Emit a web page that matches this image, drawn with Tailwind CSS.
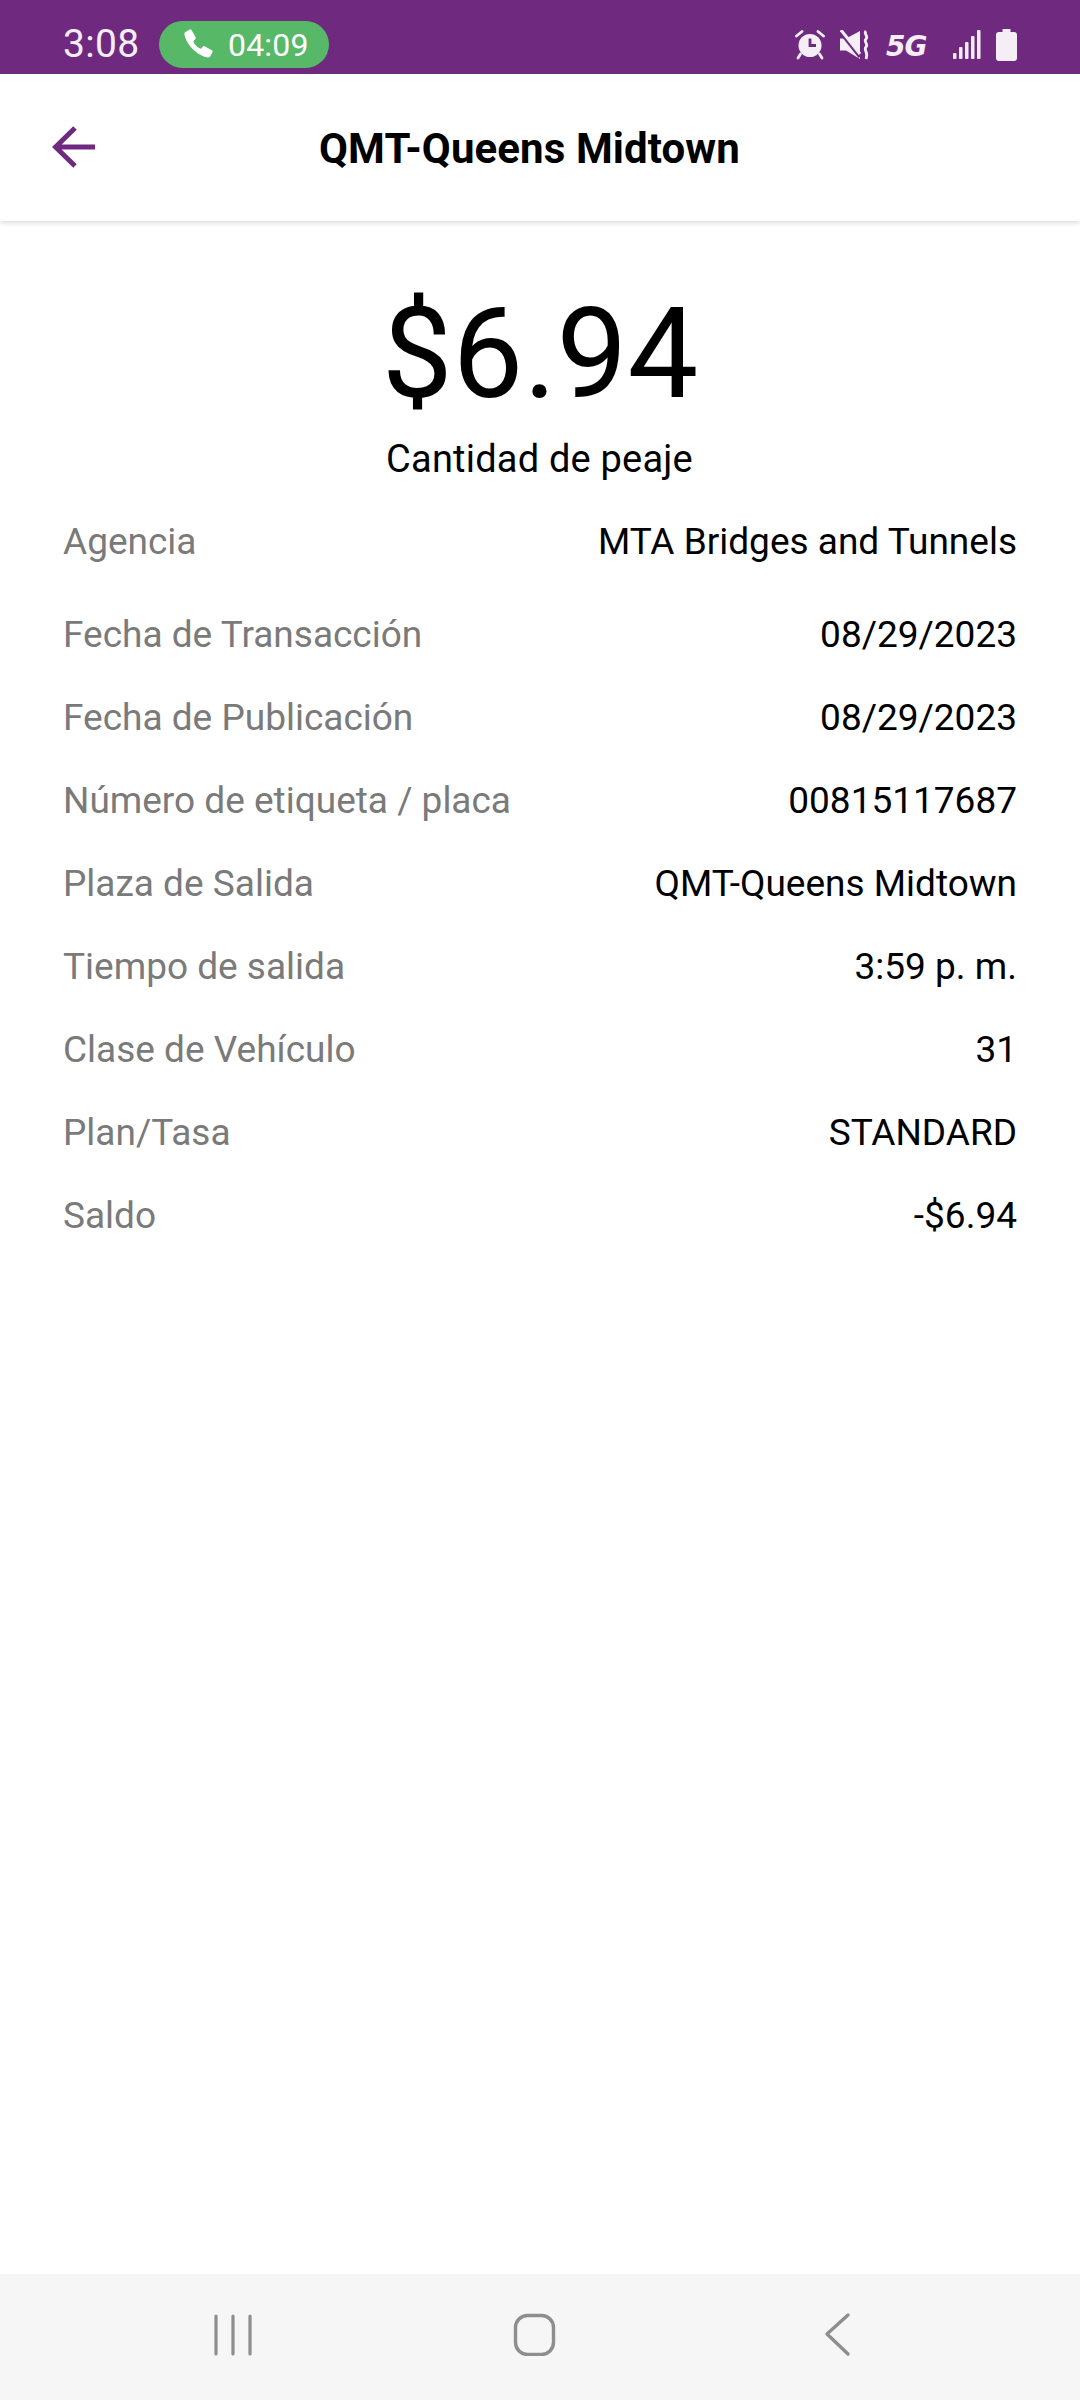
<!DOCTYPE html>
<html><head><meta charset="utf-8">
<script src="https://cdn.jsdelivr.net/npm/@tailwindcss/browser@4"></script>
</head>
<body class="m-0 bg-white">
<div class="w-[1080px] h-[2400px] flex flex-col bg-white font-['Roboto',sans-serif] overflow-hidden">
  <div class="h-[74px] shrink-0 bg-[#6f2a80] flex items-center pl-[63px] pr-[63px] pt-[15px] text-[#f5eef7]">
    <span class="text-[39px] leading-none w-[96px] tracking-[0.3px]">3:08</span>
    <div class="w-[170px] h-[47px] rounded-full bg-[#57b968] flex items-center pl-[24px] text-white">
      <svg width="31" height="31" viewBox="0 0 24 24" fill="#fff" class="mt-[-3px]"><path d="M6.600 1.500 9.800 7.200c.2.500.1 1-.2 1.300L8 10.200c.8 2.500 3.300 5 5.800 5.800l1.700-1.600c.4-.3.900-.4 1.300-.2l5.700 3.200c.5.300.6.900.3 1.400l-1.800 3.300c-.4.600-1.100.9-1.800.8C11 21.500 2.500 13 1.100 4.900c-.1-.7.200-1.400.8-1.800L5.200 1.200c.5-.3 1.100-.2 1.400.3z"/></svg>
      <span class="text-[32px] leading-none ml-[14px] tracking-[0.2px]">04:09</span>
    </div>
    <div class="ml-auto flex items-center text-[#f5eef7]">
      <svg width="30" height="30" viewBox="0 0 30 30"><path d="M1.500 6 7 1.500M28.500 6 23 1.500" stroke="#f5eef7" stroke-width="2.800" stroke-linecap="round"/><circle cx="15" cy="15.500" r="11.500" fill="#f5eef7"/><path d="M15 8.500V15.500H21" fill="none" stroke="#6f2a80" stroke-width="2.800"/><path d="M5.500 24 3 28M24.500 24 27 28" stroke="#f5eef7" stroke-width="2.800" stroke-linecap="round"/></svg>
      <svg width="30" height="30" viewBox="0 0 30 30" class="ml-[15px]"><path d="M0 8.500h6L20 1v28L6 20.500H0z" fill="#f5eef7"/><path d="M1 3 20 27" stroke="#6f2a80" stroke-width="3.500"/><path d="M1 0 20 24" stroke="#f5eef7" stroke-width="3"/><path d="M26 1c-3 3 3 5 0 8s3 5 0 8 3 5 0 12" fill="none" stroke="#f5eef7" stroke-width="2.800"/></svg>
      <span class="w-[41px] ml-[16px] text-[28px] leading-none font-bold italic font-['DejaVu_Sans',sans-serif] mt-[5px] tracking-[-1px]">5G</span>
      <svg width="28" height="29" viewBox="0 0 28 29" class="ml-[26px]" fill="#f5eef7"><rect x="0" y="23" width="3.500" height="6" rx="1"/><rect x="6" y="17" width="3.500" height="12" rx="1"/><rect x="12" y="12" width="3.500" height="17" rx="1"/><rect x="18" y="6" width="3.500" height="23" rx="1"/><rect x="24" y="0" width="3.500" height="29" rx="1"/></svg>
      <svg width="21" height="32" viewBox="0 0 21 32" class="ml-[15px]" fill="#f5eef7"><path d="M6.500 0h8v3H18a3 3 0 0 1 3 3v23a3 3 0 0 1-3 3H3a3 3 0 0 1-3-3V6a3 3 0 0 1 3-3h3.500z"/></svg>
    </div>
  </div>
  <div class="relative h-[147px] shrink-0 bg-white flex items-center justify-center shadow-[0_2px_5px_rgba(0,0,0,0.14)]">
    <svg width="44" height="42" viewBox="0 0 44 42" class="absolute left-[52px] top-[52px]" fill="none" stroke="#6f2a80" stroke-width="5"><path d="M43 21H4M23 2 3.500 21 23 40"/></svg>
    <span class="text-[42px] tracking-[0.1px] leading-none font-bold text-black mr-[21px] mt-[3px]">QMT-Queens Midtown</span>
  </div>
  <div class="flex flex-col items-center pt-[72px]">
    <div class="text-[126px] leading-[122px] text-black">$6.94</div>
    <div class="text-[38px] tracking-[0.2px] leading-[44px] text-black mt-[22px] mr-[1px]">Cantidad de peaje</div>
  </div>
  <div class="flex flex-col px-[63px] text-[37px] leading-[44px] mt-[39px]">
    <div class="flex justify-between h-[93px]"><span class="text-[#7a7a7a]">Agencia</span><span class="text-black">MTA Bridges and Tunnels</span></div>
    <div class="flex justify-between h-[83px]"><span class="text-[#7a7a7a]">Fecha de Transacción</span><span class="text-black">08/29/2023</span></div>
    <div class="flex justify-between h-[83px]"><span class="text-[#7a7a7a]">Fecha de Publicación</span><span class="text-black">08/29/2023</span></div>
    <div class="flex justify-between h-[83px]"><span class="text-[#7a7a7a]">Número de etiqueta / placa</span><span class="text-black">00815117687</span></div>
    <div class="flex justify-between h-[83px]"><span class="text-[#7a7a7a]">Plaza de Salida</span><span class="text-black">QMT-Queens Midtown</span></div>
    <div class="flex justify-between h-[83px]"><span class="text-[#7a7a7a]">Tiempo de salida</span><span class="text-black">3:59 p. m.</span></div>
    <div class="flex justify-between h-[83px]"><span class="text-[#7a7a7a]">Clase de Vehículo</span><span class="text-black">31</span></div>
    <div class="flex justify-between h-[83px]"><span class="text-[#7a7a7a]">Plan/Tasa</span><span class="text-black">STANDARD</span></div>
    <div class="flex justify-between h-[83px]"><span class="text-[#7a7a7a]">Saldo</span><span class="text-black">-$6.94</span></div>
  </div>
  <div class="mt-auto h-[126px] shrink-0 bg-[#f6f6f6] relative">
    <svg width="44" height="44" viewBox="0 0 44 44" class="absolute left-[211px] top-[40px]" stroke="#8e8e8e" stroke-width="3.200" stroke-linecap="round"><path d="M5 2v38M22 2v38M39 2v38"/></svg>
    <svg width="44" height="44" viewBox="0 0 44 44" class="absolute left-[512px] top-[38px]" fill="none" stroke="#8e8e8e" stroke-width="3.400"><rect x="3.500" y="3.500" width="38" height="39" rx="12"/></svg>
    <svg width="32" height="48" viewBox="0 0 32 48" class="absolute left-[820px] top-[38px]" fill="none" stroke="#8e8e8e" stroke-width="3.400" stroke-linecap="round" stroke-linejoin="round"><path d="M28 3 7 22l21 20"/></svg>
  </div>
</div>
</body></html>
